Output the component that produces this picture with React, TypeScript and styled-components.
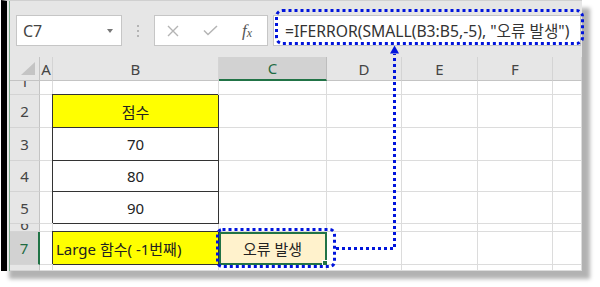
import styled, { createGlobalStyle } from 'styled-components';

const GlobalStyle = createGlobalStyle`
  html, body {
    margin: 0;
    padding: 0;
    background: #fff;
  }
  body {
    font-family: "Noto Sans", "Noto Sans CJK KR", sans-serif;
  }
`;

const Page = styled.div`
  position: relative;
  width: 600px;
  height: 287px;
  overflow: hidden;
`;

const Window = styled.div`
  box-sizing: border-box;
  display: flex;
  width: 581px;
  height: 271px;
  margin-left: 1px;
  padding-left: 2px;
  border-left: 6px solid #000;
  border-top: 1px solid #d0d0d0;
  background: #e6e6e6;
  box-shadow: 8px 8px 4px rgba(0, 0, 0, 0.3);
`;

const Content = styled.div`
  flex: 1;
  min-width: 0;
  display: flex;
  flex-direction: column;
  border-left: 1px solid #7fae8e;
`;

const FormulaBar = styled.div`
  box-sizing: border-box;
  display: flex;
  align-items: flex-start;
  height: 56px;
  padding: 14px 1px 0 6px;
`;

const Field = styled.div`
  box-sizing: border-box;
  display: flex;
  align-items: center;
  height: 31px;
  background: #fff;
  border: 1px solid #c6c6c6;
`;

const NameBox = styled(Field)`
  width: 106px;
  justify-content: space-between;
  padding: 0 8px 0 6px;
  font-size: 16px;
  color: #444;
`;

const Caret = styled.span`
  width: 0;
  height: 0;
  border-left: 3px solid transparent;
  border-right: 3px solid transparent;
  border-top: 4px solid #777;
`;

const Grip = styled.div`
  display: flex;
  flex-direction: column;
  align-items: center;
  justify-content: center;
  gap: 3px;
  width: 32px;
  height: 31px;
`;

const GripDot = styled.span`
  width: 2px;
  height: 2px;
  background: #b4b4b4;
`;

const FxBox = styled(Field)`
  width: 114px;
  gap: 24px;
  padding-left: 12px;
`;

const FxLabel = styled.span`
  font-family: "Liberation Serif", serif;
  font-style: italic;
  font-size: 17px;
  color: #555;
  line-height: 1;
  sub {
    font-size: 12px;
    vertical-align: -1px;
  }
`;

const FormulaInput = styled(Field)`
  flex: 1;
  min-width: 0;
  margin-left: 5px;
  padding-left: 11px;
  font-size: 15.7px;
  color: #333;
  white-space: nowrap;
  overflow: hidden;
`;

const Sheet = styled.div`
  display: grid;
  grid-template-columns: 30px 13px 166px 108px 75px 76px 75px 1fr;
  grid-template-rows: 24px 14px 33px 33px 31px 32px 8px 33px 6px;
  flex: 1;
  font-size: 15px;
`;

const ColHead = styled.div<{ $active?: boolean }>`
  box-sizing: border-box;
  display: flex;
  align-items: center;
  justify-content: center;
  background: ${(p) => (p.$active ? '#d2d2d2' : '#e6e6e6')};
  color: ${(p) => (p.$active ? '#1f6b42' : '#444')};
  border-right: 1px solid ${(p) => (p.$active ? '#bdbdbd' : '#d4d4d4')};
  border-bottom: ${(p) => (p.$active ? '2px solid #217346' : '1px solid #c4c4c4')};
`;

const Corner = styled(ColHead)`
  align-items: flex-end;
  justify-content: flex-end;
  padding: 0 4px 5px 0;
  border-right: 1px solid #c4c4c4;
`;

const CornerTriangle = styled.span`
  width: 14px;
  height: 13px;
  background: #c4c4c4;
  clip-path: polygon(100% 0, 100% 100%, 0 100%);
`;

type RowMode = 'normal' | 'peek';

const RowHead = styled.div<{ $active?: boolean; $mode: RowMode }>`
  box-sizing: border-box;
  display: flex;
  justify-content: center;
  align-items: ${(p) => (p.$mode === 'normal' ? 'center' : 'flex-start')};
  overflow: hidden;
  line-height: 18px;
  background: ${(p) => (p.$active ? '#d2d2d2' : '#e6e6e6')};
  color: ${(p) => (p.$active ? '#1f6b42' : '#444')};
  border-right: ${(p) => (p.$active ? '2px solid #217346' : '1px solid #c4c4c4')};
  border-bottom: 1px solid #d4d4d4;

  span {
    margin-top: ${(p) => (p.$mode === 'peek' ? '-9px' : '0')};
  }
`;

const Cell = styled.div<{ $fill?: string; $boxed?: boolean; $left?: boolean; $current?: boolean }>`
  position: relative;
  box-sizing: border-box;
  display: flex;
  align-items: center;
  justify-content: ${(p) => (p.$left ? 'flex-start' : 'center')};
  padding: 0 3px;
  white-space: nowrap;
  color: #222;
  background: ${(p) => p.$fill ?? '#fff'};
  border-right: 1px solid ${(p) => (p.$boxed ? '#333' : '#dcdcdc')};
  border-bottom: 1px solid ${(p) => (p.$boxed ? '#333' : '#dcdcdc')};
  box-shadow: ${(p) => (p.$boxed ? '-1px -1px 0 #333' : 'none')};
  outline: ${(p) => (p.$current ? '2px solid #217346' : 'none')};
  outline-offset: -2px;

  &::after {
    content: '';
    display: ${(p) => (p.$current ? 'block' : 'none')};
    position: absolute;
    right: -2px;
    bottom: -2px;
    width: 4px;
    height: 4px;
    background: #217346;
    border: 1px solid #fff;
  }
`;

const Overlay = styled.svg`
  position: absolute;
  inset: 0;
  pointer-events: none;
`;

type CellInfo = { text: string; fill?: string; boxed?: boolean; left?: boolean; current?: boolean };

const columns = ['A', 'B', 'C', 'D', 'E', 'F', ''];

// row 8 is only a sliver at the bottom of the window, so its number is not shown
const rows: { n: number; label?: string; mode: RowMode; active?: boolean }[] = [
  { n: 1, label: '1', mode: 'peek' },
  { n: 2, label: '2', mode: 'normal' },
  { n: 3, label: '3', mode: 'normal' },
  { n: 4, label: '4', mode: 'normal' },
  { n: 5, label: '5', mode: 'normal' },
  { n: 6, label: '6', mode: 'peek' },
  { n: 7, label: '7', mode: 'normal', active: true },
  { n: 8, mode: 'normal' },
];

const cells: Record<string, CellInfo> = {
  B2: { text: '점수', fill: '#ffff00', boxed: true },
  B3: { text: '70', boxed: true },
  B4: { text: '80', boxed: true },
  B5: { text: '90', boxed: true },
  B7: { text: 'Large 함수( -1번째)', fill: '#ffff00', boxed: true, left: true },
  C7: { text: '오류 발생', fill: '#fff2cc', current: true },
};

const BLUE = '#0014dc';

export default function App() {
  return (
    <Page>
      <GlobalStyle />
      <Window>
        <Content>
          <FormulaBar>
            <NameBox>
              C7
              <Caret />
            </NameBox>
            <Grip>
              <GripDot />
              <GripDot />
              <GripDot />
            </Grip>
            <FxBox>
              <svg width="12" height="12" viewBox="0 0 12 12">
                <path d="M1 1 L11 11 M11 1 L1 11" stroke="#b4b4b4" strokeWidth="1.4" fill="none" />
              </svg>
              <svg width="15" height="11" viewBox="0 0 15 11">
                <path d="M1 5.5 L5 9.5 L14 1" stroke="#b4b4b4" strokeWidth="1.5" fill="none" />
              </svg>
              <FxLabel>
                f<sub>x</sub>
              </FxLabel>
            </FxBox>
            <FormulaInput>=IFERROR(SMALL(B3:B5,-5), "오류 발생")</FormulaInput>
          </FormulaBar>

          <Sheet>
            <Corner>
              <CornerTriangle />
            </Corner>
            {columns.map((c, i) => (
              <ColHead key={`h${i}`} $active={c === 'C'}>
                {c}
              </ColHead>
            ))}
            {rows.map((r) => [
              <RowHead key={`r${r.n}`} $mode={r.mode} $active={r.active}>
                {r.label && <span>{r.label}</span>}
              </RowHead>,
              ...columns.map((c, i) => {
                const info = cells[`${c}${r.n}`];
                return (
                  <Cell
                    key={`c${r.n}-${i}`}
                    $fill={info?.fill}
                    $boxed={info?.boxed}
                    $left={info?.left}
                    $current={info?.current}
                  >
                    {info?.text}
                  </Cell>
                );
              }),
            ])}
          </Sheet>
        </Content>
      </Window>

      <Overlay width="600" height="287" viewBox="0 0 600 287">
        <g fill="none" stroke={BLUE} strokeWidth={3} strokeDasharray="3 3">
          <rect x={276.5} y={10.5} width={306} height={33} rx={6} />
          <rect x={217.5} y={229.5} width={117} height={37} rx={5} />
          <path d="M336 248.5 H394.5 V54" />
        </g>
        <path d="M394.5 45.5 L390 53.5 L399 53.5 Z" fill={BLUE} />
      </Overlay>
    </Page>
  );
}
